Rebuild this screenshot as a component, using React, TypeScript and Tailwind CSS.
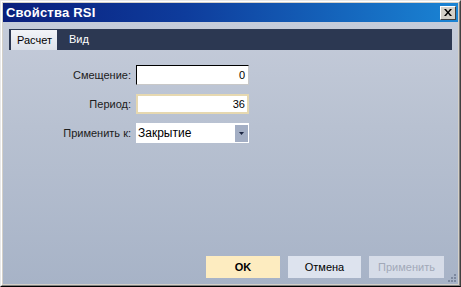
import React from "react";

export default function App() {
  const font = { fontFamily: '"Liberation Sans", Arial, sans-serif' };
  return (
    <div style={font} className="w-[461px] h-[287px] bg-[#d4d0c8] border-t border-l border-t-[#e8e8e8] border-l-[#e8e8e8] border-r border-b border-r-[#404040] border-b-[#000] flex flex-col">
      <div className="flex-1 flex flex-col border-t border-l border-t-white border-l-white border-r border-b border-r-[#808080] border-b-[#808080] p-[1px]">
        {/* Title bar */}
        <div className="h-[19px] flex items-center justify-between bg-[linear-gradient(to_right,#0a1f7c_0%,#0e3c9c_40%,#1a84d4_100%)] pl-[3px] pr-[2px]">
          <span className="text-white font-bold text-[13px] leading-none tracking-[0.2px]">Свойства RSI</span>
          <div className="w-[16px] h-[14px] bg-[#d4d0c8] border-t border-l border-t-white border-l-white border-r border-b border-r-[#404040] border-b-[#404040] flex items-center justify-center">
            <svg width="8" height="7" viewBox="0 0 8 7">
              <path d="M0 0h2l2 2.5L6 0h2L5 3.5 8 7H6L4 4.5 2 7H0l3-3.5z" fill="#000" />
            </svg>
          </div>
        </div>
        {/* Body */}
        <div className="flex-1 flex flex-col bg-[linear-gradient(to_bottom,#c5ccda_0%,#b8c1d1_40%,#a7b3c7_100%)] pt-[7px]">
          {/* Tabs */}
          <div className="mx-[6px] h-[21px] bg-[#2c3852] flex items-stretch text-[11px]">
            <div className="w-[48px] bg-[linear-gradient(to_bottom,#f2f4f8,#dde2ea)] border-l-2 border-[#2c3852] flex items-center pl-[6px] text-black mt-[1px] mb-0">
              Расчет
            </div>
            <div className="flex items-center pl-[12px] text-white">Вид</div>
          </div>
          {/* Form */}
          <div className="mt-[15px] grid grid-cols-[128px_113px] gap-x-[5px] gap-y-[9px] items-center text-[11px]">
            <div className="text-right text-[#202020]">Смещение:</div>
            <div className="h-[20px] bg-white border-t border-l border-t-black border-l-black border-r border-b border-r-[#c8c8c8] border-b-[#c8c8c8] flex items-center justify-end pr-[3px] text-black">0</div>
            <div className="text-right text-[#202020]">Период:</div>
            <div className="h-[20px] bg-white border-2 border-[#e6d8b0] flex items-center justify-end pr-[2px] text-black">36</div>
            <div className="text-right text-[#202020]">Применить к:</div>
            <div className="h-[20px] bg-white flex items-center pl-[2px] pr-[1px] text-black">
              <span className="flex-1 text-[12px]">Закрытие</span>
              <div className="w-[13px] h-[17px] bg-[#a3aec4] flex items-center justify-center">
                <svg width="5" height="3" viewBox="0 0 5 3"><path d="M0 0h5L2.5 3z" fill="#1a2440" /></svg>
              </div>
            </div>
          </div>
          <div className="flex-1" />
          {/* Buttons */}
          <div className="flex justify-end gap-[8px] pr-[14px] mb-[2px] text-[11px]">
            <div className="w-[74px] h-[22px] bg-[#fdecc0] flex items-center justify-center font-bold text-black">OK</div>
            <div className="w-[73px] h-[22px] bg-[#dde3ee] flex items-center justify-center text-black">Отмена</div>
            <div className="w-[75px] h-[22px] bg-[#d6dce8] flex items-center justify-center text-[#a2a9b8]">Применить</div>
          </div>
          <div className="flex justify-end pr-[2px] h-[4px] relative">
            <svg className="absolute right-[2px] bottom-[0px]" width="10" height="10" viewBox="0 0 10 10">
              <g fill="#7c889e">
                <rect x="8" y="0" width="2" height="2" />
                <rect x="5" y="3" width="2" height="2" />
                <rect x="8" y="3" width="2" height="2" />
                <rect x="2" y="6" width="2" height="2" />
                <rect x="5" y="6" width="2" height="2" />
                <rect x="8" y="6" width="2" height="2" />
              </g>
            </svg>
          </div>
        </div>
      </div>
    </div>
  );
}
